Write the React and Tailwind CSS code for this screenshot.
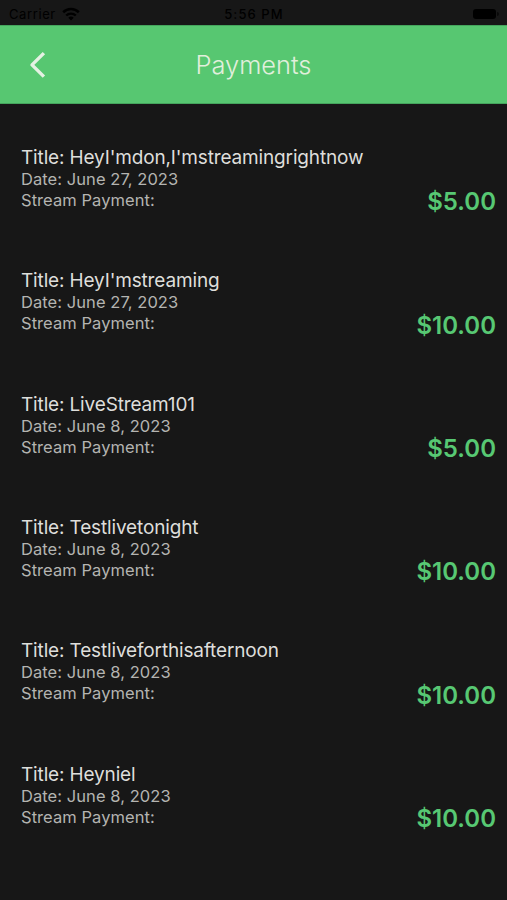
import React from "react";

const payments = [
  { id: 1, title: "HeyI'mdon,I'mstreamingrightnow", date: "June 27, 2023", amount: "$5.00" },
  { id: 2, title: "HeyI'mstreaming", date: "June 27, 2023", amount: "$10.00" },
  { id: 3, title: "LiveStream101", date: "June 8, 2023", amount: "$5.00" },
  { id: 4, title: "Testlivetonight", date: "June 8, 2023", amount: "$10.00" },
  { id: 5, title: "Testliveforthisafternoon", date: "June 8, 2023", amount: "$10.00" },
  { id: 6, title: "Heyniel", date: "June 8, 2023", amount: "$10.00" },
];

function StatusBar() {
  return (
    <div className="grid h-[25px] shrink-0 grid-cols-3 items-center pt-[3px] pr-2 pl-[9px] text-[13px] leading-none text-black">
      <div className="flex items-center gap-[6px]">
        <span className="tracking-[0.6px]">Carrier</span>
        <svg width="18" height="14" viewBox="0 0 18 14" fill="none">
          <path d="M1.2 5.2a11.2 11.2 0 0 1 15.6 0" stroke="currentColor" strokeWidth="2.6" />
          <path d="M4.2 8.5a7 7 0 0 1 9.6 0" stroke="currentColor" strokeWidth="2.4" />
          <path d="M9 13.6 6.3 10.7a4 4 0 0 1 5.4 0Z" fill="currentColor" />
        </svg>
      </div>
      <span className="text-center font-medium tracking-[1.1px]">5:56 PM</span>
      <div className="flex items-center justify-end gap-px">
        <div className="h-[10px] w-[23px] rounded-[3px] bg-black" />
        <div className="h-1 w-0.5 rounded-r-full bg-black/60" />
      </div>
    </div>
  );
}

function PaymentRow({ payment }) {
  return (
    <li className="flex h-[123.35px] items-end justify-between pr-[11px] pb-[16.3px] pl-[21px]">
      <div className="text-[#b4b4b1]">
        <p className="text-[19px] leading-[23px] tracking-[-0.15px] text-[#dededb]">
          Title: {payment.title}
        </p>
        <p className="text-[16.5px] leading-[21px] tracking-[0.06px]">Date: {payment.date}</p>
        <p className="text-[16.5px] leading-[21px] tracking-[0.06px]">Stream Payment:</p>
      </div>
      <span className="-mb-[2.3px] text-[24px] leading-[22px] font-semibold text-[#57c873]">
        {payment.amount}
      </span>
    </li>
  );
}

export default function App() {
  return (
    <div className="flex h-screen flex-col overflow-hidden bg-[#171717] font-['Inter',sans-serif]">
      <StatusBar />
      <header className="grid h-[79px] shrink-0 grid-cols-[60px_1fr_60px] items-center border-y border-[#45a55d] bg-[#57c771]">
        <button type="button" aria-label="Back" className="ml-[29px] w-[18px]">
          <svg width="18" height="28" viewBox="0 0 18 28" fill="none">
            <path
              d="M14.9 2.1 3 13.9l11.9 11.7"
              stroke="#e5f1e3"
              strokeWidth="3.4"
              strokeLinejoin="round"
            />
          </svg>
        </button>
        <h1 className="pt-px text-center text-[25.4px] leading-none font-light text-[#e1efdc]">
          Payments
        </h1>
      </header>
      <ul className="flex-1">
        {payments.map((payment) => (
          <PaymentRow key={payment.id} payment={payment} />
        ))}
      </ul>
    </div>
  );
}
